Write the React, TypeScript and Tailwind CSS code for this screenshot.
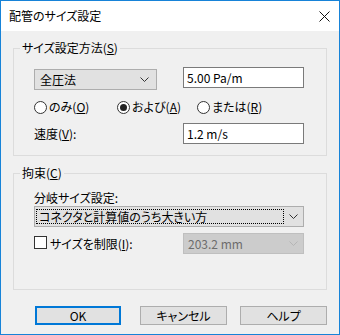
import React from 'react';

const font = "font-['Noto_Sans_CJK_JP',sans-serif] [font-feature-settings:'palt']";

function Chevron({ color = '#333' }: { color?: string }) {
  return (
    <svg width="9" height="5" viewBox="0 0 9 5" className="block">
      <path d="M0.5 0.5 L4.5 4.5 L8.5 0.5" fill="none" stroke={color} strokeWidth="1" />
    </svg>
  );
}

function Radio({ checked, children }: { checked?: boolean; children: React.ReactNode }) {
  return (
    <div className="flex items-center">
      <div className="w-[13px] h-[13px] rounded-full border border-[#333] bg-white flex items-center justify-center">
        {checked && <div className="w-[7px] h-[7px] rounded-full bg-[#222]" />}
      </div>
      <span className="ml-[2px] leading-[16px]">{children}</span>
    </div>
  );
}

function Group({ label, children, className = '' }: { label: React.ReactNode; children: React.ReactNode; className?: string }) {
  return (
    <fieldset className={`mx-[12px] border border-[#dcdcdc] ${className}`}>
      <legend className="ml-[6px] px-[2px] leading-[16px]">{label}</legend>
      {children}
    </fieldset>
  );
}

export default function App() {
  return (
    <div className={`w-[340px] h-[335px] border border-[#1783d8] bg-[#f0f0f0] text-[12px] text-black flex flex-col ${font}`}>
      {/* Title bar */}
      <div className="h-[30px] bg-white flex items-center justify-between pl-[8px] pr-[9px] shrink-0">
        <span className="leading-[16px]">配管のサイズ設定</span>
        <svg width="11" height="11" viewBox="0 0 11 11">
          <path d="M0.5 0.5 L10.5 10.5 M10.5 0.5 L0.5 10.5" stroke="#111" strokeWidth="1" />
        </svg>
      </div>

      <div className="pt-[9px]">
        <Group label={<>サイズ設定方法(<u>S</u>)</>}>
          <div className="pl-[20px] pt-[11px] pb-[11px]">
            <div className="flex items-start">
              <div className="mt-[2px] w-[123px] h-[21px] bg-[#e1e1e1] border border-[#adadad] flex items-center justify-between pl-[5px] pr-[7px]">
                <span className="leading-[16px]">全圧法</span>
                <Chevron />
              </div>
              <div className="ml-[26px] w-[121px] h-[21px] bg-white border border-[#7a7a7a] flex items-center px-[3px]">
                <span className="leading-[16px]">5.00 Pa/m</span>
              </div>
            </div>
            <div className="flex items-center mt-[9px] h-[16px]">
              <div className="w-[83px]"><Radio>のみ(<u>O</u>)</Radio></div>
              <div className="w-[80px]"><Radio checked>および(<u>A</u>)</Radio></div>
              <Radio>または(<u>R</u>)</Radio>
            </div>
            <div className="flex items-center mt-[8px]">
              <span className="w-[149px] leading-[16px]">速度(<u>V</u>):</span>
              <div className="w-[121px] h-[21px] bg-white border border-[#7a7a7a] flex items-center px-[3px]">
                <span className="leading-[16px]">1.2 m/s</span>
              </div>
            </div>
          </div>
        </Group>

        <Group label={<>拘束(<u>C</u>)</>} className="mt-[9px]">
          <div className="pl-[20px] pt-[9px] pb-[35px]">
            <div className="leading-[16px]">分岐サイズ設定:</div>
            <div className="w-[270px] h-[21px] bg-[#e1e1e1] border border-[#adadad] flex items-center pl-[1px] pr-[5px]">
              <div className="w-[248px] h-[15px] border border-dotted border-black flex items-center pl-[2px]">
                <span className="leading-[14px]">コネクタと計算値のうち大きい方</span>
              </div>
              <div className="ml-auto"><Chevron /></div>
            </div>
            <div className="flex items-center mt-[6px]">
              <div className="w-[149px] flex items-center">
                <div className="w-[13px] h-[13px] border border-[#333] bg-white -mt-[3px]" />
                <span className="ml-[3px] leading-[16px]">サイズを制限(<u>I</u>):</span>
              </div>
              <div className="w-[121px] h-[21px] bg-[#cccccc] border border-[#bfbfbf] flex items-center justify-between pl-[4px] pr-[5px]">
                <span className="leading-[16px] text-[#6d6d6d]">203.2 mm</span>
                <Chevron color="#b5b5b5" />
              </div>
            </div>
          </div>
        </Group>

        <div className="flex mt-[16px] pl-[34px]">
          <button className="w-[86px] h-[19px] bg-[#e1e1e1] border-2 border-[#0078d7] flex items-center justify-center leading-[16px]">OK</button>
          <button className="ml-[19px] w-[87px] h-[19px] bg-[#e1e1e1] border border-[#adadad] flex items-center justify-center leading-[16px]">キャンセル</button>
          <button className="ml-[13px] w-[87px] h-[19px] bg-[#e1e1e1] border border-[#adadad] flex items-center justify-center leading-[16px]">ヘルプ</button>
        </div>
      </div>
    </div>
  );
}
